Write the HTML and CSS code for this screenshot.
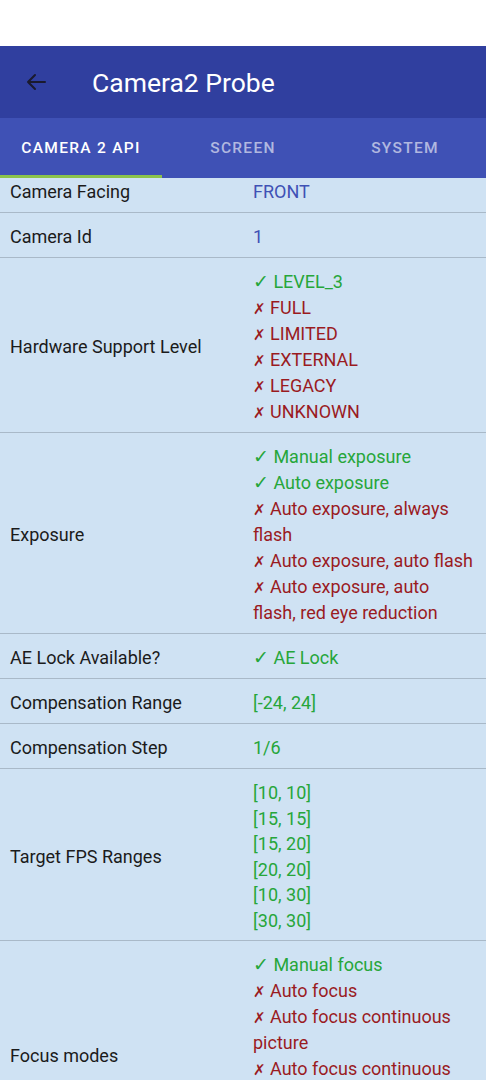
FILE: index.html
```html
<!DOCTYPE html>
<html lang="en">
<head>
    <meta charset="UTF-8">
    <meta name="viewport" content="width=device-width, initial-scale=1.0">
    <title>Camera2 Probe</title>
    <link rel="stylesheet" href="styles.css">
</head>
<body>
    <div class="status-bar"></div>

    <header class="app-bar">
        <svg class="back" width="24" height="24" viewBox="0 0 24 24">
            <path d="M21 12H4M11 5l-7 7 7 7" fill="none" stroke="#1a1a2e" stroke-width="2" stroke-linecap="round" stroke-linejoin="round"/>
        </svg>
        <h1>Camera2 Probe</h1>
    </header>

    <nav class="tabs">
        <div class="tab active">CAMERA 2 API</div>
        <div class="tab">SCREEN</div>
        <div class="tab">SYSTEM</div>
    </nav>

    <main class="content">
        <div class="list">
            <div class="row">
                <div class="label">Camera Facing</div>
                <div class="value">
                    <div class="info">FRONT</div>
                </div>
            </div>
            <div class="row">
                <div class="label">Camera Id</div>
                <div class="value">
                    <div class="info">1</div>
                </div>
            </div>
            <div class="row">
                <div class="label">Hardware Support Level</div>
                <div class="value">
                    <div class="yes"><span class="mark">✓</span> LEVEL_3</div>
                    <div class="no"><span class="mark">✗</span> FULL</div>
                    <div class="no"><span class="mark">✗</span> LIMITED</div>
                    <div class="no"><span class="mark">✗</span> EXTERNAL</div>
                    <div class="no"><span class="mark">✗</span> LEGACY</div>
                    <div class="no"><span class="mark">✗</span> UNKNOWN</div>
                </div>
            </div>
            <div class="row">
                <div class="label">Exposure</div>
                <div class="value">
                    <div class="yes"><span class="mark">✓</span> Manual exposure</div>
                    <div class="yes"><span class="mark">✓</span> Auto exposure</div>
                    <div class="no"><span class="mark">✗</span> Auto exposure, always flash</div>
                    <div class="no"><span class="mark">✗</span> Auto exposure, auto flash</div>
                    <div class="no"><span class="mark">✗</span> Auto exposure, auto flash, red eye reduction</div>
                </div>
            </div>
            <div class="row">
                <div class="label">AE Lock Available?</div>
                <div class="value">
                    <div class="yes"><span class="mark">✓</span> AE Lock</div>
                </div>
            </div>
            <div class="row">
                <div class="label">Compensation Range</div>
                <div class="value">
                    <div class="num">[-24, 24]</div>
                </div>
            </div>
            <div class="row">
                <div class="label">Compensation Step</div>
                <div class="value">
                    <div class="num">1/6</div>
                </div>
            </div>
            <div class="row">
                <div class="label">Target FPS Ranges</div>
                <div class="value">
                    <div class="num">[10, 10]</div>
                    <div class="num">[15, 15]</div>
                    <div class="num">[15, 20]</div>
                    <div class="num">[20, 20]</div>
                    <div class="num">[10, 30]</div>
                    <div class="num">[30, 30]</div>
                </div>
            </div>
            <div class="row">
                <div class="label">Focus modes</div>
                <div class="value">
                    <div class="yes"><span class="mark">✓</span> Manual focus</div>
                    <div class="no"><span class="mark">✗</span> Auto focus</div>
                    <div class="no"><span class="mark">✗</span> Auto focus continuous picture</div>
                    <div class="no"><span class="mark">✗</span> Auto focus continuous video</div>
                    <div class="no"><span class="mark">✗</span> Extended depth of field</div>
                    <div class="no"><span class="mark">✗</span> Macro focus</div>
                </div>
            </div>
        </div>
    </main>
</body>
</html>
```

FILE: styles.css
```css
body {
    margin: 0;
    font-family: Roboto, "DejaVu Sans", sans-serif;
    background-color: #cfe2f3;
    color: #1b1b1b;
    height: 1080px;
    overflow: hidden;
}
.status-bar {
    height: 46px;
    background-color: #ffffff;
}
.app-bar {
    display: flex;
    align-items: center;
    height: 72px;
    padding: 0 0 0 24px;
    background-color: #303f9f;
    color: white;
}
.back {
    margin-right: 44px;
}
.app-bar h1 {
    margin: 0;
    font-size: 26.5px;
    font-weight: 400;
}
.tabs {
    display: flex;
    height: 60px;
    background-color: #3f51b5;
}
.tab {
    flex: 1;
    display: flex;
    align-items: center;
    justify-content: center;
    padding-top: 3px;
    font-size: 15.5px;
    font-weight: 500;
    letter-spacing: 1.3px;
    color: rgba(255, 255, 255, 0.6);
    border-bottom: 3px solid transparent;
    box-sizing: border-box;
}
.tab.active {
    color: white;
    border-bottom-color: #8bc34a;
}
.content {
    overflow: hidden;
}
.list {
    margin-top: -10px;
}
.row {
    display: grid;
    grid-template-columns: 243px 1fr;
    align-items: center;
    padding: 11px 11px 7px 10px;
    border-bottom: 1px solid #a9b9c8;
    font-size: 18px;
    line-height: 26px;
}
.label {
    color: #1b1b1b;
}
.info {
    color: #3f51b5;
}
.yes {
    color: #26a63a;
}
.num {
    color: #26a63a;
    line-height: 25.5px;
}
.no {
    color: #9a1b1f;
}
.mark {
    display: inline-block;
    line-height: 1;
    font-family: "DejaVu Sans", sans-serif;
    font-size: 19px;
}
.no .mark {
    font-size: 15px;
    font-weight: bold;
}
```
